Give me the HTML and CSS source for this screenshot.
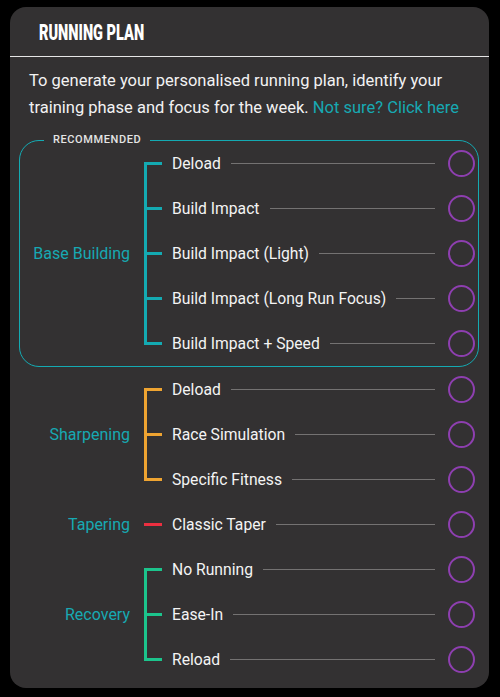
FILE: index.html
```html
<!DOCTYPE html>
<html>
<head>
<meta charset="utf-8">
<link rel="stylesheet" href="styles.css">
</head>
<body>
<div class="card">
  <div class="header"><h1 class="title">RUNNING PLAN</h1></div>
  <p class="intro">To generate your personalised running plan, identify your training phase and focus for the week. <span class="link">Not sure? Click here</span></p>

  <div class="group recommended teal">
    <div class="badge">RECOMMENDED</div>
    <div class="label">Base Building</div>
    <div class="items">
      <div class="item first"><span class="tick"></span><span class="name">Deload</span><span class="rule"></span><span class="radio"></span></div>
      <div class="item"><span class="tick"></span><span class="name">Build Impact</span><span class="rule"></span><span class="radio"></span></div>
      <div class="item"><span class="tick"></span><span class="name">Build Impact (Light)</span><span class="rule"></span><span class="radio"></span></div>
      <div class="item"><span class="tick"></span><span class="name">Build Impact (Long Run Focus)</span><span class="rule"></span><span class="radio"></span></div>
      <div class="item last"><span class="tick"></span><span class="name">Build Impact + Speed</span><span class="rule"></span><span class="radio"></span></div>
    </div>
  </div>

  <div class="group orange">
    <div class="label">Sharpening</div>
    <div class="items">
      <div class="item first"><span class="tick"></span><span class="name">Deload</span><span class="rule"></span><span class="radio"></span></div>
      <div class="item"><span class="tick"></span><span class="name">Race Simulation</span><span class="rule"></span><span class="radio"></span></div>
      <div class="item last"><span class="tick"></span><span class="name">Specific Fitness</span><span class="rule"></span><span class="radio"></span></div>
    </div>
  </div>

  <div class="group red">
    <div class="label">Tapering</div>
    <div class="items">
      <div class="item single"><span class="tick"></span><span class="name">Classic Taper</span><span class="rule"></span><span class="radio"></span></div>
    </div>
  </div>

  <div class="group green">
    <div class="label">Recovery</div>
    <div class="items">
      <div class="item first"><span class="tick"></span><span class="name">No Running</span><span class="rule"></span><span class="radio"></span></div>
      <div class="item"><span class="tick"></span><span class="name">Ease-In</span><span class="rule"></span><span class="radio"></span></div>
      <div class="item last"><span class="tick"></span><span class="name">Reload</span><span class="rule"></span><span class="radio"></span></div>
    </div>
  </div>
</div>
</body>
</html>
```

FILE: styles.css
```css
html, body {
  margin: 0;
  padding: 0;
  background: #000;
}
body {
  padding: 7px 11px 9px 10px;
  font-family: Roboto, "Liberation Sans", sans-serif;
  color: #f2f2f2;
}
.card {
  background: #333132;
  border-radius: 16px;
  padding: 0 10px 5px 9px;
  height: 681px;
  box-sizing: border-box;
}
.header {
  margin: 0 -10px 0 -9px;
  height: 49px;
  border-bottom: 1px solid #e6e6e6;
  display: flex;
  align-items: center;
  padding-left: 29px;
}
.title {
  margin: 0;
  display: inline-block;
  font-family: Roboto, "Liberation Sans", sans-serif;
  font-weight: 900;
  font-size: 22px;
  letter-spacing: 0;
  color: #fff;
  transform: scaleX(0.66);
  transform-origin: left center;
  padding-top: 2px;
  white-space: nowrap;
}
.intro {
  margin: 0;
  padding: 10px 0 0 10px;
  font-size: 16.5px;
  line-height: 27px;
  height: 83px;
  box-sizing: border-box;
}
.link { color: #17a9b2; }

.group {
  display: flex;
  align-items: center;
  border: 1.5px solid transparent;
  border-top-width: 0;
  border-bottom-width: 0;
}
.recommended {
  position: relative;
  border: 1.5px solid #14aab2;
  border-radius: 20px;
}
.badge {
  position: absolute;
  left: 24px;
  top: -8px;
  padding: 0 9px;
  background: #333132;
  font-size: 11px;
  font-weight: 500;
  letter-spacing: 0.6px;
  line-height: 14px;
  color: #e4e4e4;
}
.label {
  width: 110px;
  flex: none;
  text-align: right;
  font-size: 16px;
  color: #17a9b2;
}
.items {
  flex: 1;
  padding-left: 14px;
}
.item {
  height: 45px;
  display: flex;
  align-items: center;
}
.tick {
  width: 18px;
  height: 100%;
  flex: none;
  margin-right: 10px;
  --c: #14aab2;
  background:
    linear-gradient(var(--c), var(--c)) left center / 100% 3px no-repeat,
    linear-gradient(var(--c), var(--c)) left top / 3px 100% no-repeat;
}
.item.first .tick {
  background:
    linear-gradient(var(--c), var(--c)) left center / 100% 3px no-repeat,
    linear-gradient(var(--c), var(--c)) left bottom / 3px 50% no-repeat;
}
.item.last .tick {
  background:
    linear-gradient(var(--c), var(--c)) left center / 100% 3px no-repeat,
    linear-gradient(var(--c), var(--c)) left top / 3px calc(50% + 1.5px) no-repeat;
}
.item.single .tick {
  background: linear-gradient(var(--c), var(--c)) left center / 100% 3px no-repeat;
}
.orange .tick { --c: #efa431; }
.red .tick { --c: #ec2f40; }
.green .tick { --c: #1cc48c; }

.name {
  font-size: 15.7px;
  white-space: nowrap;
  color: #f4f4f4;
}
.rule {
  flex: 1;
  height: 1px;
  background: #747272;
  margin: 0 13px 0 10px;
}
.radio {
  width: 27px;
  height: 27px;
  box-sizing: border-box;
  border: 2.5px solid #8e3fb0;
  border-radius: 50%;
  flex: none;
  margin-right: 3px;
}
```
